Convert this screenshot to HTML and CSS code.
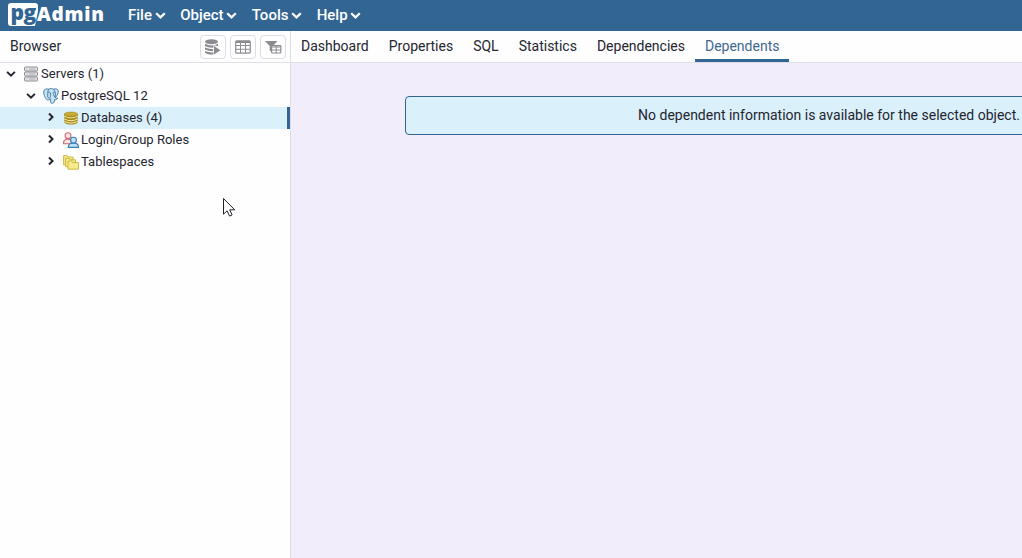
FILE: index.html
```html
<!DOCTYPE html>
<html lang="en">
<head>
<meta charset="utf-8">
<title>pgAdmin</title>
<link rel="stylesheet" href="styles.css">
</head>
<body>
<svg class="defs" width="0" height="0"><defs>
<symbol id="down" viewBox="0 0 10 8"><path d="M1.1 1.9 5 5.7 8.9 1.9" fill="none" stroke="currentColor" stroke-width="2"/></symbol>
<symbol id="right" viewBox="0 0 8 10"><path d="M2 1.5 5.5 5 2 8.5" fill="none" stroke="currentColor" stroke-width="2"/></symbol>
</defs></svg>
<header class="navbar">
<div class="logo"><span class="logo-pg">pg</span><span class="logo-admin">Admin</span></div>
<nav class="menu">
<a class="menu-item">File<svg class="caret"><use href="#down"/></svg></a>
<a class="menu-item">Object<svg class="caret"><use href="#down"/></svg></a>
<a class="menu-item">Tools<svg class="caret"><use href="#down"/></svg></a>
<a class="menu-item">Help<svg class="caret"><use href="#down"/></svg></a>
</nav>
</header>
<main class="workspace">
<aside class="browser">
<div class="browser-head"><span class="browser-title">Browser</span>
<div class="tools">
<button class="tool"><svg width="18" height="16" viewBox="0 0 18 16" fill="#8c8b90"><ellipse cx="7.5" cy="2.7" rx="6.5" ry="2.5"/><path d="M1 4.8Q7.5 8 14 4.8V7L9.5 6.2v2.4Q4 9 1 7zM1 8.6Q5 10.4 9 9.9V12.2Q4 12.2 1 10.6zM1 12Q5 13.8 9.5 13.4V15.5Q3 15.8 1 13.8zM10 6.9 16.4 11.2 10 15.4z"/></svg></button>
<button class="tool"><svg width="16" height="14" viewBox="0 0 16 14" fill="none" stroke="#8c8b90"><rect x=".7" y=".9" width="14.6" height="12.2" rx="1" stroke-width="1.2"/><path d="M1 2h14" stroke-width="2"/><path d="M1 5.5h14M1 9.3h14M5.5 2v11M10.5 2v11"/></svg></button>
<button class="tool"><svg width="18" height="14" viewBox="0 0 18 14"><path d="M1 1h12.5L9 6v7L5.7 10.4V6z" fill="#8c8b90"/><rect x="7.6" y="5.6" width="9.2" height="7.4" rx=".8" fill="#fff" stroke="#8c8b90" stroke-width="1.2"/><path d="M8 7h9M8 10h9M12.2 6v7" stroke="#8c8b90"/></svg></button>
</div></div>
<div class="tree">
<div class="node level-0"><svg class="twist-down"><use href="#down"/></svg><svg class="icon" viewBox="0 0 16 16" fill="#e8e8ea" stroke="#8d8b91"><rect x="1.5" y="1" width="13" height="4" rx="1"/><rect x="1.5" y="6" width="13" height="4" rx="1"/><rect x="1.5" y="11" width="13" height="4" rx="1"/><path d="M3.5 3h1M3.5 8h1M3.5 13h1M6 3h6.5M6 8h6.5M6 13h6.5" stroke="#aaa8ae"/></svg><span class="label">Servers (1)</span></div>
<div class="node level-1"><svg class="twist-down"><use href="#down"/></svg><svg class="icon" viewBox="0 0 16 16" fill="#c5e3f2" stroke="#3e769b" stroke-width=".9"><path d="M3.5 11.3C1.5 9.3.4 5.3.8 3.1 1.3.7 4 .6 5.8 1.2 7.5.2 9 .4 10.3 1.2c2-.8 4.5-.2 5 1.6.3 2.4-1.3 5-3 7 .8.4 1.9.2 2.5.4-.5 1-2 1.7-3.3 1.5-.1 1.8-.3 3.3-1.8 3.6-2 .5-2.3-.9-2.3-4.5-1.3.9-2.4 1.8-3.9.5z"/><path d="M5.8 1.2C4 3.5 5 6.8 4.7 8.8c.2 1.4 1.7 1.3 2.5.6.7-1.2.3-3.1 0-4.7M10.3 1.2c2 2 2.6 4.4 1.8 8.5M5 4.6c1-.8 2.2-.3 2.3.5M12.1 4.4c-1-.5-2-.2-2 .7 0 1.6 1 2.5 1.8 4" fill="none"/></svg><span class="label">PostgreSQL 12</span></div>
<div class="node level-2 selected"><svg class="twist-right"><use href="#right"/></svg><svg class="icon" viewBox="0 0 16 16"><path d="M1.3 4v8.5C3 15.2 13 15.2 14.7 12.5V4z" fill="#a58a20"/><path d="M1.3 6.2Q8 9.6 14.7 6.2M1.3 9Q8 12.4 14.7 9M1.3 11.7Q8 14.7 14.7 11.7" fill="none" stroke="#f8eca4" stroke-width="1"/><ellipse cx="8" cy="4.2" rx="6.7" ry="2.1" fill="#c9ad3a" stroke="#9d831b" stroke-width=".6"/></svg><span class="label">Databases (4)</span></div>
<div class="node level-2"><svg class="twist-right"><use href="#right"/></svg><svg class="icon" viewBox="0 0 16 16"><g fill="#fbe5e5" stroke="#cf6674" stroke-width="1.1"><path d="M.6 11.7C.3 8.7 1.3 7.6 3.8 7.2h2C8.5 7.5 9.5 9 9.5 11.7z"/><circle cx="5" cy="3.7" r="2.9"/></g><g fill="#bfe0f5" stroke="#397db5" stroke-width="1.1"><path d="M5.2 15.4c0-2.7 1-4 4-4.3h2.6c2.7.3 3.7 1.6 3.7 4.3z"/><circle cx="10.5" cy="8.2" r="2.9"/></g></svg><span class="label">Login/Group Roles</span></div>
<div class="node level-2"><svg class="twist-right"><use href="#right"/></svg><svg class="icon" viewBox="0 0 16 16" fill="#f7eb8b" stroke="#c9b03a" stroke-width=".9"><path d="M.6 10.8V1.5h3.5l1 1.5h5v7.8z"/><path d="M2.6 12.8V4.3h3.5l1 1.5h5.4v7z"/><path d="M5 15.2V7h3.8l1 1.6h5.7v6.6z"/></svg><span class="label">Tablespaces</span></div>
</div>
</aside>
<section class="content">
<div class="tabs"><a class="tab">Dashboard</a><a class="tab">Properties</a><a class="tab">SQL</a><a class="tab">Statistics</a><a class="tab">Dependencies</a><a class="tab active">Dependents</a></div>
<div class="panel"><div class="alert">No dependent information is available for the selected object.</div></div>
</section>
</main>
<svg class="cursor" width="14" height="21" viewBox="0 0 14 21"><path d="M1.5 1.5v15.7l3.6-3.4 2.5 5.3 2.5-1.2-2.4-5.1h5z" fill="#fff" stroke="#24202b"/></svg>
</body>
</html>
```
FILE: styles.css
```css
* { box-sizing: border-box; }
body { margin: 0; height: 558px; overflow: hidden; display: flex; flex-direction: column; background: #fefefe; color: #24252f; font: 14px Roboto, "Liberation Sans", sans-serif; }
.defs { position: absolute; }
.navbar { height: 31px; flex: none; display: flex; align-items: flex-start; background: #336592; color: #fff; padding-left: 8px; }
.logo { display: flex; width: 120px; height: 31px; padding-top: 3px; font: 800 19px/23px "Open Sans", sans-serif; }
.logo-pg { width: 30px; height: 23px; line-height: 19px; text-align: center; background: #fff; color: #336592; border-radius: 3px; font-size: 21px; letter-spacing: -.5px; clip-path: polygon(0 0, 100% 0, 100% 35%, 90% 100%, 0 100%); }
.logo-admin { line-height: 22px; margin-left: -1px; letter-spacing: .75px; }
.menu { display: flex; height: 30px; gap: 15px; font-size: 15px; font-weight: 500; }
.menu-item { display: flex; align-items: center; gap: 3px; white-space: nowrap; }
.caret { width: 11px; height: 9px; margin: 1px -.5px 0 -.3px; }
.workspace { display: flex; flex: 1; min-height: 0; }
.browser { width: 291px; flex: none; border-right: 1px solid #dedce8; }
.browser-head { height: 32px; display: flex; justify-content: space-between; align-items: center; padding: 0 4px 0 10px; border-bottom: 1px solid #e0dee8; }
.browser-title { padding-bottom: 2px; }
.tools { display: flex; gap: 4px; }
.tool { width: 26px; height: 24px; padding: 0; display: flex; align-items: center; justify-content: center; background: #fff; border: 1px solid #dddbe6; border-radius: 4px; }
.tree { font-size: 13px; letter-spacing: .02px; }
.node { height: 22px; display: flex; align-items: center; white-space: nowrap; }
.label { padding-bottom: 2px; }
.level-0 { padding-left: 6px; }
.level-1 { padding-left: 26px; }
.level-2 { padding-left: 47px; }
.selected { background: #daf0fb; border-right: 3px solid #336592; }
.twist-down { width: 10px; height: 8px; margin: 0 7px 1px 0; }
.twist-right { width: 8px; height: 10px; margin: 0 8px 2px 0; }
.icon { width: 16px; height: 16px; margin-right: 2px; }
.content { flex: 1; min-width: 0; display: flex; flex-direction: column; background: #f1edfa; }
.tabs { height: 32px; flex: none; display: flex; background: #fefefe; border-bottom: 1px solid #dfdde8; }
.tab { height: 31px; padding: 0 10px; line-height: 30px; white-space: nowrap; border-bottom: 3px solid transparent; }
.active { color: #40688e; border-color: #336592; }
.panel { padding: 33px 0 0 114px; overflow: hidden; }
.alert { width: 848px; height: 39px; line-height: 36px; text-align: center; background: #daf0fb; border: 1px solid #336592; border-radius: 4px; }
.cursor { position: absolute; left: 222px; top: 197px; }
```
